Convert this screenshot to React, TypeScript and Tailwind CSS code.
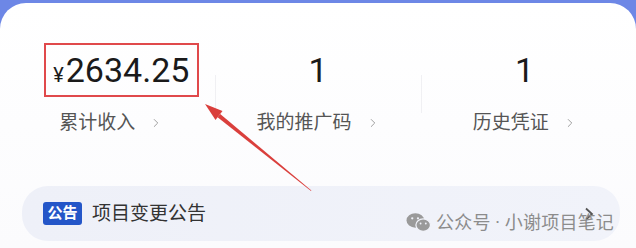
import { ChevronRight } from 'lucide-react'

const font = { fontFamily: 'Roboto, "Noto Sans CJK SC", sans-serif' }

function Stat({ value, label, boxed }: { value: React.ReactNode; label: string; boxed?: boolean }) {
  return (
    <div className="flex flex-col items-center">
      <div
        className={
          boxed
            ? 'flex h-[54px] w-[155px] items-center justify-center border-2 border-[#e0494b] ml-[20px]'
            : 'flex h-[54px] items-center justify-center'
        }
      >
        <span className="text-[34px] leading-none text-[#1a1a1a]">{value}</span>
      </div>
      <div className="mt-[16px] flex items-center gap-[14px] text-[19px] leading-none text-[#555]">
        <span>{label}</span>
        <ChevronRight className="h-[14px] w-[14px] text-[#999]" strokeWidth={1.6} />
      </div>
    </div>
  )
}

export default function App() {
  return (
    <div className="relative h-[248px] w-[636px] overflow-hidden bg-[#6d87e6]" style={font}>
      <div className="mt-[3px] h-[245px] rounded-t-[26px] bg-gradient-to-b from-white to-[#fbfbfd] pt-[40px]">
        {/* Stats */}
        <div className="grid grid-cols-3 px-[8px]">
          <Stat
            boxed
            value={
              <>
                <span className="mr-[2px] text-[20px]">¥</span>2634.25
              </>
            }
            label="累计收入"
          />
          <div className="relative">
            <div className="absolute left-0 top-[32px] h-[38px] w-px bg-[#f0f0f3]" />
            <Stat value="1" label="我的推广码" />
          </div>
          <div className="relative">
            <div className="absolute left-0 top-[32px] h-[38px] w-px bg-[#f0f0f3]" />
            <Stat value="1" label="历史凭证" />
          </div>
        </div>

        {/* Notice */}
        <div className="ml-[22px] mr-[16px] mt-[54px] flex h-[55px] items-center rounded-[26px] bg-gradient-to-r from-[#eef0f8] to-[#f1f3fa] pl-[21px] pr-[12px]">
          <span className="flex h-[23px] w-[39px] items-center justify-center rounded-[3px] bg-[#2456c8] text-[15px] font-bold leading-none text-white">
            公告
          </span>
          <span className="ml-[10px] text-[19px] leading-none text-[#333]">项目变更公告</span>
        </div>
      </div>

      {/* notice chevron */}
      <svg className="absolute left-[584px] top-[207px]" width="10" height="14" viewBox="0 0 10 14">
        <path d="M2 1.5 L8 7 L2 12.5" fill="none" stroke="#555" strokeWidth="1.8" />
      </svg>

      {/* watermark */}
      <div className="absolute left-[406px] top-[212px] flex items-center gap-[5px] text-[18px] leading-none text-[#8c8c8c]">
        <svg width="25" height="21" viewBox="0 0 24 20" className="text-[#9a9a9a]">
          <ellipse cx="9" cy="8" rx="8.5" ry="7" fill="currentColor" />
          <ellipse cx="16.5" cy="12.5" rx="7" ry="6" fill="currentColor" stroke="#f0f2f9" strokeWidth="1.2" />
          <circle cx="6" cy="6" r="1.1" fill="#f0f2f9" />
          <circle cx="11.5" cy="6" r="1.1" fill="#f0f2f9" />
          <circle cx="14" cy="11" r="0.9" fill="#f0f2f9" />
          <circle cx="19" cy="11" r="0.9" fill="#f0f2f9" />
        </svg>
        <span className="tracking-[0.2px]">公众号 · 小谢项目笔记</span>
      </div>

      {/* red arrow */}
      <svg className="absolute left-0 top-0" width="636" height="248" viewBox="0 0 636 248">
        <polygon points="205,104 222.5,111 215.5,120" fill="#da3f3c" />
        <polygon points="220.2,114.1 217.6,117.2 311,191 311.4,190.5" fill="#da3f3c" />
      </svg>
    </div>
  )
}
